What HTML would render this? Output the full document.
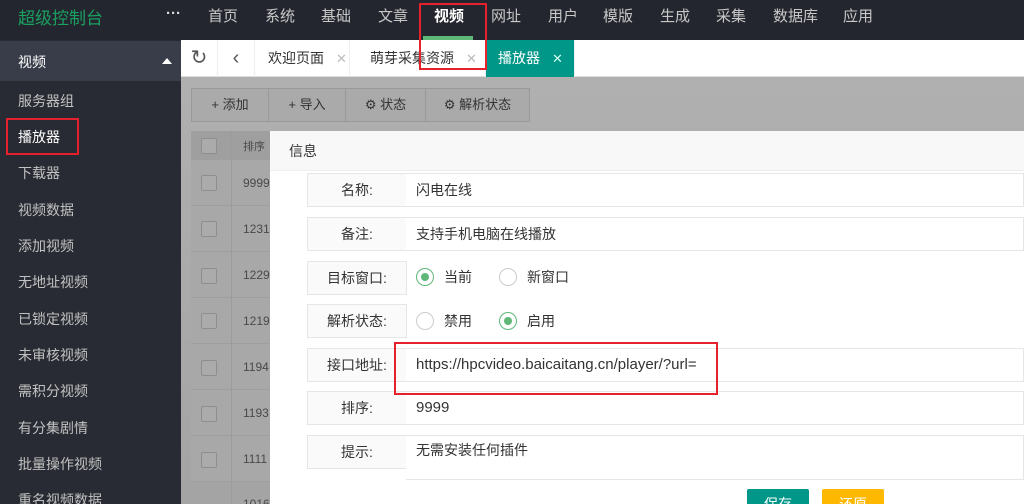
<!DOCTYPE html>
<html><head><meta charset="utf-8"><style>
*{margin:0;padding:0;box-sizing:border-box}
html,body{width:1024px;height:504px;overflow:hidden}
body{position:relative;font-family:"Liberation Sans","Noto Sans CJK SC",sans-serif;background:#a9a9a9}
.a{position:absolute}
#top{left:0;top:0;width:1024px;height:40px;background:#23262e}
.nav{top:5px;font-size:15px;color:#c8c8c8}
#side{left:0;top:40px;width:181px;height:464px;background:#282b33}
.si{left:18px;font-size:14px;color:#c2c2c2}
#tabs{left:181px;top:40px;width:843px;height:37px;background:#fff;border-bottom:1px solid #ddd}
.tab{top:40px;height:37px;line-height:37px;font-size:14px;color:#333;border-right:1px solid #eee}
.x{color:#bbb;margin-left:12px;font-size:13px}
#main{left:181px;top:77px;width:843px;height:427px;background:linear-gradient(#b0b0b0,#a4a4a4)}
.btn{top:88px;height:34px;line-height:32px;border:1px solid #999;background:#aaa;font-size:13px;color:#333;text-align:center}
.row{left:191px;width:80px;height:46px;border-bottom:1px solid #9e9e9e;background:#a8a8a8}
.cb{left:201px;width:16px;height:16px;border:1px solid #8e8e8e;border-radius:2px;background:#ababab}
.num{left:243px;font-size:12px;color:#4a4a4a}
#dlg{left:270px;top:131px;width:754px;height:373px;background:#fff}
#dh{left:270px;top:131px;width:754px;height:40px;background:#f8f8f8;border-bottom:1px solid #eee;font-size:14px;color:#333;line-height:40px;padding-left:19px}
.lb{left:307px;width:100px;height:34px;background:#fafafa;border:1px solid #e6e6e6;font-size:14px;color:#333;text-align:center;line-height:32px}
.in{left:406px;width:618px;height:34px;border:1px solid #e6e6e6;border-left:none;font-size:14px;color:#333;line-height:32px;padding-left:10px;background:#fff}
.rad{font-size:14px;color:#333;line-height:32px}
.rc{display:inline-block;width:18px;height:18px;border:1px solid #ccc;border-radius:50%;vertical-align:-4px;margin-right:10px;position:relative}
.rc.on{border-color:#5FB878}
.rc.on:after{content:"";position:absolute;left:4px;top:4px;width:8px;height:8px;border-radius:50%;background:#5FB878}
.red{border:2px solid #e5212b}
</style></head><body>
<div id="top" class="a"></div>
<div class="a" style="left:18px;top:4px;font-size:17px;color:#1aa060">超级控制台</div>
<div class="a" style="left:166px;top:5px;font-size:15px;color:#ddd;font-weight:bold">···</div>
<div class="a nav" style="left:208px">首页</div>
<div class="a nav" style="left:265px">系统</div>
<div class="a nav" style="left:321px">基础</div>
<div class="a nav" style="left:378px">文章</div>
<div class="a nav" style="left:434px;color:#fff;font-weight:bold">视频</div>
<div class="a nav" style="left:491px">网址</div>
<div class="a nav" style="left:548px">用户</div>
<div class="a nav" style="left:603px">模版</div>
<div class="a nav" style="left:660px">生成</div>
<div class="a nav" style="left:716px">采集</div>
<div class="a nav" style="left:773px">数据库</div>
<div class="a nav" style="left:843px">应用</div>
<div class="a" style="left:423px;top:36px;width:50px;height:4px;background:#5FB878"></div>

<div id="side" class="a"></div>
<div class="a" style="left:0;top:41px;width:181px;height:40px;background:#393d49"></div>
<div class="a si" style="top:52px;color:#fff">视频</div>
<div class="a" style="left:162px;top:58px;width:0;height:0;border-left:5px solid transparent;border-right:5px solid transparent;border-bottom:6px solid #fff"></div>
<div class="a si" style="top:91px">服务器组</div>
<div class="a si" style="top:127px;color:#fff">播放器</div>
<div class="a si" style="top:163px">下载器</div>
<div class="a si" style="top:200px">视频数据</div>
<div class="a si" style="top:236px">添加视频</div>
<div class="a si" style="top:272px">无地址视频</div>
<div class="a si" style="top:309px">已锁定视频</div>
<div class="a si" style="top:345px">未审核视频</div>
<div class="a si" style="top:381px">需积分视频</div>
<div class="a si" style="top:418px">有分集剧情</div>
<div class="a si" style="top:454px">批量操作视频</div>
<div class="a si" style="top:490px">重名视频数据</div>
<div class="a red" style="left:6px;top:118px;width:73px;height:37px"></div>

<div id="tabs" class="a"></div>
<div class="a tab" style="left:181px;width:37px;text-align:center;font-size:20px;color:#555">&#x21bb;</div>
<div class="a tab" style="left:218px;width:37px;text-align:center;font-size:20px;color:#555">&lsaquo;</div>
<div class="a tab" style="left:255px;width:95px;padding-left:13px">欢迎页面<span class="x">✕</span></div>
<div class="a tab" style="left:350px;width:136px;padding-left:20px">萌芽采集资源<span class="x">✕</span></div>
<div class="a tab" style="left:486px;width:89px;padding-left:12px;background:#009688;color:#fff">播放器<span class="x" style="color:#cfe">✕</span></div>
<div class="a red" style="left:419px;top:3px;width:68px;height:67px"></div>

<div id="main" class="a"></div>
<div class="a btn" style="left:191px;width:78px">+ 添加</div>
<div class="a btn" style="left:268px;width:78px">+ 导入</div>
<div class="a btn" style="left:345px;width:81px">⚙ 状态</div>
<div class="a btn" style="left:425px;width:105px">⚙ 解析状态</div>
<div class="a" style="left:191px;top:131px;width:80px;height:29px;background:#9f9f9f"></div>
<div class="a cb" style="top:138px"></div>
<div class="a num" style="top:138px;font-size:11px">排序</div>
<div class="a row" style="top:160px"></div><div class="a cb" style="top:175px"></div><div class="a num" style="top:176px">9999</div>
<div class="a row" style="top:206px"></div><div class="a cb" style="top:221px"></div><div class="a num" style="top:222px">1231</div>
<div class="a row" style="top:252px"></div><div class="a cb" style="top:268px"></div><div class="a num" style="top:268px">1229</div>
<div class="a row" style="top:298px"></div><div class="a cb" style="top:313px"></div><div class="a num" style="top:314px">1219</div>
<div class="a row" style="top:344px"></div><div class="a cb" style="top:360px"></div><div class="a num" style="top:360px">1194</div>
<div class="a row" style="top:390px"></div><div class="a cb" style="top:406px"></div><div class="a num" style="top:406px">1193</div>
<div class="a row" style="top:436px"></div><div class="a cb" style="top:452px"></div><div class="a num" style="top:452px">1111</div>
<div class="a num" style="top:497px">1016</div>
<div class="a" style="left:231px;top:131px;width:1px;height:373px;background:#9c9c9c"></div>

<div id="dlg" class="a"></div>
<div id="dh" class="a">信息</div>
<div class="a lb" style="top:173px">名称:</div><div class="a in" style="top:173px">闪电在线</div>
<div class="a lb" style="top:217px">备注:</div><div class="a in" style="top:217px">支持手机电脑在线播放</div>
<div class="a lb" style="top:261px">目标窗口:</div>
<div class="a rad" style="left:416px;top:261px"><span class="rc on"></span>当前</div>
<div class="a rad" style="left:499px;top:261px"><span class="rc"></span>新窗口</div>
<div class="a lb" style="top:304px">解析状态:</div>
<div class="a rad" style="left:416px;top:305px"><span class="rc"></span>禁用</div>
<div class="a rad" style="left:499px;top:305px"><span class="rc on"></span>启用</div>
<div class="a lb" style="top:348px">接口地址:</div><div class="a in" style="top:348px;font-size:15px">https://hpcvideo.baicaitang.cn/player/?url=</div>
<div class="a lb" style="top:391px">排序:</div><div class="a in" style="top:391px;font-size:15px">9999</div>
<div class="a lb" style="top:435px">提示:</div><div class="a in" style="top:435px;height:45px;line-height:28px">无需安装任何插件</div>
<div class="a red" style="left:394px;top:342px;width:324px;height:53px"></div>
<div class="a" style="left:747px;top:489px;width:62px;height:30px;background:#009688;border-radius:2px;color:#fff;font-size:14px;text-align:center;line-height:30px">保存</div>
<div class="a" style="left:822px;top:489px;width:62px;height:30px;background:#FFB800;border-radius:2px;color:#fff;font-size:14px;text-align:center;line-height:30px">还原</div>
</body></html>
